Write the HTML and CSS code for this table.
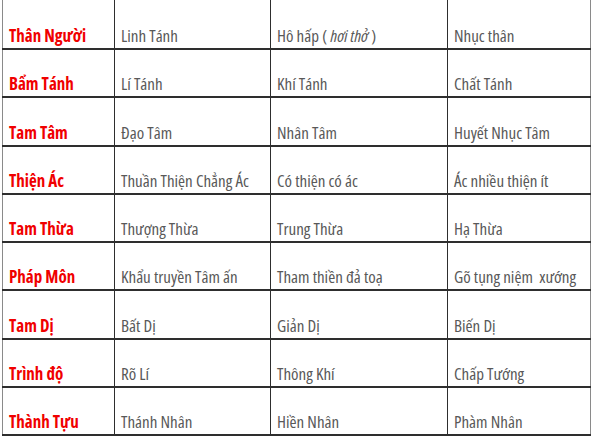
FILE: index.html
```html
<!DOCTYPE html>
<html lang="vi">
<head>
<meta charset="utf-8">
<link rel="stylesheet" href="styles.css">
</head>
<body>
<table class="grid">
  <colgroup>
    <col class="c1"><col class="c2"><col class="c3"><col class="c4">
  </colgroup>
  <tr class="first">
    <th>Thân Người</th><td>Linh Tánh</td><td>Hô hấp ( <i>hơi thở</i> )</td><td>Nhục thân</td>
  </tr>
  <tr>
    <th>Bẩm Tánh</th><td>Lí Tánh</td><td>Khí Tánh</td><td>Chất Tánh</td>
  </tr>
  <tr>
    <th>Tam Tâm</th><td>Đạo Tâm</td><td>Nhân Tâm</td><td>Huyết Nhục Tâm</td>
  </tr>
  <tr>
    <th>Thiện Ác</th><td>Thuần Thiện Chẳng Ác</td><td>Có thiện có ác</td><td>Ác nhiều thiện ít</td>
  </tr>
  <tr>
    <th>Tam Thừa</th><td>Thượng Thừa</td><td>Trung Thừa</td><td>Hạ Thừa</td>
  </tr>
  <tr>
    <th>Pháp Môn</th><td>Khẩu truyền Tâm ấn</td><td>Tham thiền đả toạ</td><td>Gõ tụng niệm &nbsp;xướng</td>
  </tr>
  <tr>
    <th>Tam Dị</th><td>Bất Dị</td><td>Giản Dị</td><td>Biến Dị</td>
  </tr>
  <tr>
    <th>Trình độ</th><td>Rõ Lí</td><td>Thông Khí</td><td>Chấp Tướng</td>
  </tr>
  <tr>
    <th>Thành Tựu</th><td>Thánh Nhân</td><td>Hiền Nhân</td><td>Phàm Nhân</td>
  </tr>
</table>
</body>
</html>
```

FILE: styles.css
```css
html, body {
  margin: 0;
  padding: 0;
  background: #ffffff;
}

.grid {
  margin-left: 2px;
  border-collapse: collapse;
  table-layout: fixed;
  width: 588px;
  font-family: "Open Sans", "DejaVu Sans Condensed", sans-serif;
  font-stretch: 75%;
  font-size: 17px;
  line-height: 20px;
}

.c1 { width: 112px; }
.c2 { width: 156px; }
.c3 { width: 177px; }
.c4 { width: 143px; }

.grid tr {
  height: 48.25px;
}

.grid tr.first {
  height: 49px;
}

.grid th,
.grid td {
  border-bottom: 2px solid #2e2e2e;
  border-right: 1.5px solid #2e2e2e;
  border-left: 1.5px solid #2e2e2e;
  vertical-align: bottom;
  padding: 0 0 2px 6px;
  text-align: left;
  white-space: nowrap;
  overflow: hidden;
}

.grid th {
  color: #f00000;
  font-weight: bold;
  border-left: 1px solid #8a8a8a;
}

.grid td {
  color: #595959;
  font-weight: normal;
}

.grid td:last-child {
  border-right: 1px solid #8a8a8a;
}

.grid i {
  font-style: italic;
}
```
